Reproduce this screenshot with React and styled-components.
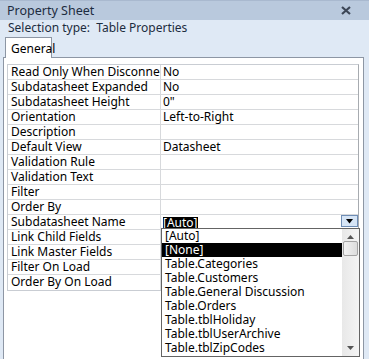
import React from "react";
import styled, { createGlobalStyle } from "styled-components";

const Global = createGlobalStyle`
  html, body { margin: 0; padding: 0; background: #dfe9f5; }
  body { font-family: "Noto Sans", "Open Sans", sans-serif; }
`;

const Window = styled.div`
  position: relative;
  width: 369px;
  height: 359px;
  box-sizing: border-box;
  background: #dfe9f5;
  border-top: 1px solid #a9b9cf;
  overflow: hidden;
  font-size: 12px;
  color: #000;
`;

const TitleBar = styled.div`
  height: 19px;
  background: #b9c9dd;
  display: flex;
  align-items: center;
  justify-content: space-between;
  padding: 0 18px 0 7px;
  color: #1d2c40;
  font-size: 12.5px;
`;

const CloseButton = styled.svg`
  display: block;
`;

const SelectionLine = styled.div`
  height: 17px;
  line-height: 16px;
  padding-left: 8px;
  color: #1d2c40;
  white-space: pre;
`;

const TabStrip = styled.div`
  display: flex;
  padding-left: 5px;
  height: 20px;
`;

const Tab = styled.div`
  width: 47px;
  box-sizing: border-box;
  background: #fff;
  border: 1px solid #8d96a4;
  border-bottom: none;
  padding: 2px 0 0 5px;
  position: relative;
  z-index: 1;
  margin-bottom: -1px;
`;

const Panel = styled.div`
  margin: 0 5px 0 3px;
  height: 400px;
  background: #fff;
  border: 1px solid #8d96a4;
  padding: 6px 2px 0 3px;
`;

const Grid = styled.div`
  border: 1px solid #c9cdd3;
  border-right: 1px solid #a7abb0;
  width: 352px;
  box-sizing: border-box;
`;

const Row = styled.div`
  display: grid;
  grid-template-columns: 153px 1fr;
  height: 15px;
  box-sizing: border-box;
  border-bottom: 1px solid #d7d9dc;
  line-height: 14px;
  &:last-child { border-bottom: none; }
`;

const Label = styled.div`
  padding-left: 3px;
  border-right: 1px solid #d7d9dc;
  white-space: nowrap;
  overflow: hidden;
`;

const Value = styled.div`
  position: relative;
  padding-left: 2px;
  white-space: nowrap;
`;

const Selected = styled.span`
  display: inline-block;
  background: #000;
  color: #fff;
  height: 11px;
  line-height: 11px;
  margin-top: 2px;
`;

const DropButton = styled.div`
  position: absolute;
  right: 0;
  top: 0;
  width: 17px;
  height: 12px;
  box-sizing: border-box;
  border: 1px solid #6e8db5;
  background: #d6e5f6;
  display: flex;
  align-items: center;
  justify-content: center;
`;

const List = styled.div`
  position: absolute;
  left: 0;
  top: 13px;
  width: 199px;
  height: 129px;
  box-sizing: border-box;
  border: 1px solid #646464;
  background: #fff;
  display: flex;
  z-index: 5;
`;

const Items = styled.div`
  flex: 1;
`;

const Item = styled.div`
  height: 14px;
  line-height: 14px;
  padding-left: 3px;
  background: ${(p) => (p.$active ? "#000" : "transparent")};
  color: ${(p) => (p.$active ? "#fff" : "#000")};
`;

const ScrollBar = styled.div`
  width: 17px;
  background: linear-gradient(to right, #e8e8e8, #f4f4f4);
  display: flex;
  flex-direction: column;
  align-items: center;
`;

const Arrow = styled.svg`
  display: block;
  margin: ${(p) => p.$m};
`;

const Thumb = styled.div`
  width: 15px;
  height: 15px;
  box-sizing: border-box;
  border: 1px solid #a3a3a3;
  border-radius: 2px;
  background: linear-gradient(to right, #f2f2f2, #dcdcdc);
  margin-top: 2px;
`;

const Spacer = styled.div`
  flex: 1;
`;

const rows = [
  ["Read Only When Disconnected", "No"],
  ["Subdatasheet Expanded", "No"],
  ["Subdatasheet Height", "0\""],
  ["Orientation", "Left-to-Right"],
  ["Description", ""],
  ["Default View", "Datasheet"],
  ["Validation Rule", ""],
  ["Validation Text", ""],
  ["Filter", ""],
  ["Order By", ""],
  ["Subdatasheet Name", "__DROP__"],
  ["Link Child Fields", ""],
  ["Link Master Fields", ""],
  ["Filter On Load", ""],
  ["Order By On Load", ""],
];

const options = [
  "[Auto]",
  "[None]",
  "Table.Categories",
  "Table.Customers",
  "Table.General Discussion",
  "Table.Orders",
  "Table.tblHoliday",
  "Table.tblUserArchive",
  "Table.tblZipCodes",
];

export default function App() {
  return (
    <>
      <Global />
      <Window>
        <TitleBar>
          <span>Property Sheet</span>
          <CloseButton width="10" height="9" viewBox="0 0 10 9">
            <path d="M1 1 L9 8 M9 1 L1 8" stroke="#3c4656" strokeWidth="2.2" />
          </CloseButton>
        </TitleBar>
        <SelectionLine>{"Selection type:  Table Properties"}</SelectionLine>
        <TabStrip>
          <Tab>General</Tab>
        </TabStrip>
        <Panel>
          <Grid>
            {rows.map(([label, value]) => (
              <Row key={label}>
                <Label>{label}</Label>
                <Value>
                  {value === "__DROP__" ? (
                    <>
                      <Selected>[Auto]</Selected>
                      <DropButton>
                        <svg width="7" height="5" viewBox="0 0 7 5">
                          <path d="M0 0 H7 L3.5 4.5 Z" fill="#000" />
                        </svg>
                      </DropButton>
                      <List>
                        <Items>
                          {options.map((o) => (
                            <Item key={o} $active={o === "[None]"}>
                              {o}
                            </Item>
                          ))}
                        </Items>
                        <ScrollBar>
                          <Arrow $m="6px 0 0 0" width="7" height="4" viewBox="0 0 7 4">
                            <path d="M0 4 H7 L3.5 0 Z" fill="#555" />
                          </Arrow>
                          <Thumb />
                          <Spacer />
                          <Arrow $m="0 0 6px 0" width="7" height="4" viewBox="0 0 7 4">
                            <path d="M0 0 H7 L3.5 4 Z" fill="#555" />
                          </Arrow>
                        </ScrollBar>
                      </List>
                    </>
                  ) : (
                    value
                  )}
                </Value>
              </Row>
            ))}
          </Grid>
        </Panel>
      </Window>
    </>
  );
}
